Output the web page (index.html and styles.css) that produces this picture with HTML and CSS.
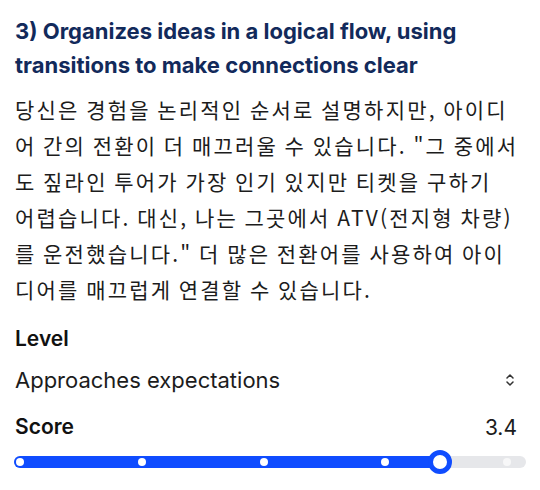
FILE: index.html
```html
<!DOCTYPE html>
<html lang="ko">
<head>
<meta charset="utf-8">
<link rel="stylesheet" href="styles.css">
</head>
<body>
<div class="card">
  <h2 class="title">3) Organizes ideas in a logical flow, using transitions to make connections clear</h2>
  <p class="feedback">당신은 경험을 논리적인 순서로 설명하지만, 아이디<br>어 간의 전환이 더 매끄러울 수 있습니다. "그 중에서<br>도 짚라인 투어가 가장 인기 있지만 티켓을 구하기<br>어렵습니다. 대신, 나는 그곳에서 ATV(전지형 차량)<br>를 운전했습니다." 더 많은 전환어를 사용하여 아이<br>디어를 매끄럽게 연결할 수 있습니다.</p>
  <div class="label level">Level</div>
  <div class="select">
    <span>Approaches expectations</span>
    <svg class="chev" width="10" height="16" viewBox="0 0 10 16"><path d="M2 6 L5 3 L8 6 M2 10 L5 13 L8 10" fill="none" stroke="#333" stroke-width="1.5" stroke-linecap="round" stroke-linejoin="round"/></svg>
  </div>
  <div class="score-row">
    <span class="label">Score</span>
    <span class="value">3.4</span>
  </div>
  <div class="slider">
    <div class="track">
      <div class="fill" style="width: 426px"></div>
      <div class="ticks">
        <span class="tick on"></span><span class="tick on"></span><span class="tick on"></span><span class="tick on"></span><span class="tick off"></span>
      </div>
      <div class="thumb" style="left: 414px"></div>
    </div>
  </div>
</div>
</body>
</html>
```
FILE: styles.css
```css
html, body { margin: 0; padding: 0; background: #fff; }
body { font-family: Inter, "Noto Sans CJK KR", sans-serif; color: #1c1c1c; }
.card { padding: 14px 10px 0 15px; }
.title { margin: 0; font-size: 22px; line-height: 34px; font-weight: 700; color: #122a5b; }
.feedback { margin: 9px 0 0 0; font-size: 21px; line-height: 36px; letter-spacing: 2.2px; word-spacing: -1.5px; white-space: nowrap; color: #1c1c1c; font-family: "Noto Sans CJK KR", Inter, sans-serif; font-weight: 400; }
.label { font-size: 21px; line-height: 26px; font-weight: 600; color: #111; }
.level { margin-top: 19px; }
.select { margin-top: 14px; height: 28px; display: flex; align-items: center; justify-content: space-between; font-size: 22px; color: #1c1c1c; padding-right: 15px; }
.chev { display: block; }
.score-row { margin-top: 19px; height: 28px; display: flex; align-items: center; justify-content: space-between; padding-right: 13px; }
.value { font-size: 21px; color: #1c1c1c; }
.slider { margin-top: 9px; margin-left: -1px; width: 512px; height: 24px; display: flex; align-items: center; }
.track { position: relative; width: 512px; height: 12px; border-radius: 6px; background: #e6e7ea; }
.fill { height: 12px; border-radius: 6px; background: #0f4cff; }
.ticks { position: absolute; left: 2px; right: 15px; top: 2px; height: 8px; display: flex; justify-content: space-between; }
.tick { width: 8px; height: 8px; border-radius: 50%; background: #fff; }
.tick.off { background: #f7f7f8; }
.thumb { position: absolute; top: -6px; width: 14px; height: 14px; border: 5px solid #0f4cff; border-radius: 50%; background: #fff; }
```
